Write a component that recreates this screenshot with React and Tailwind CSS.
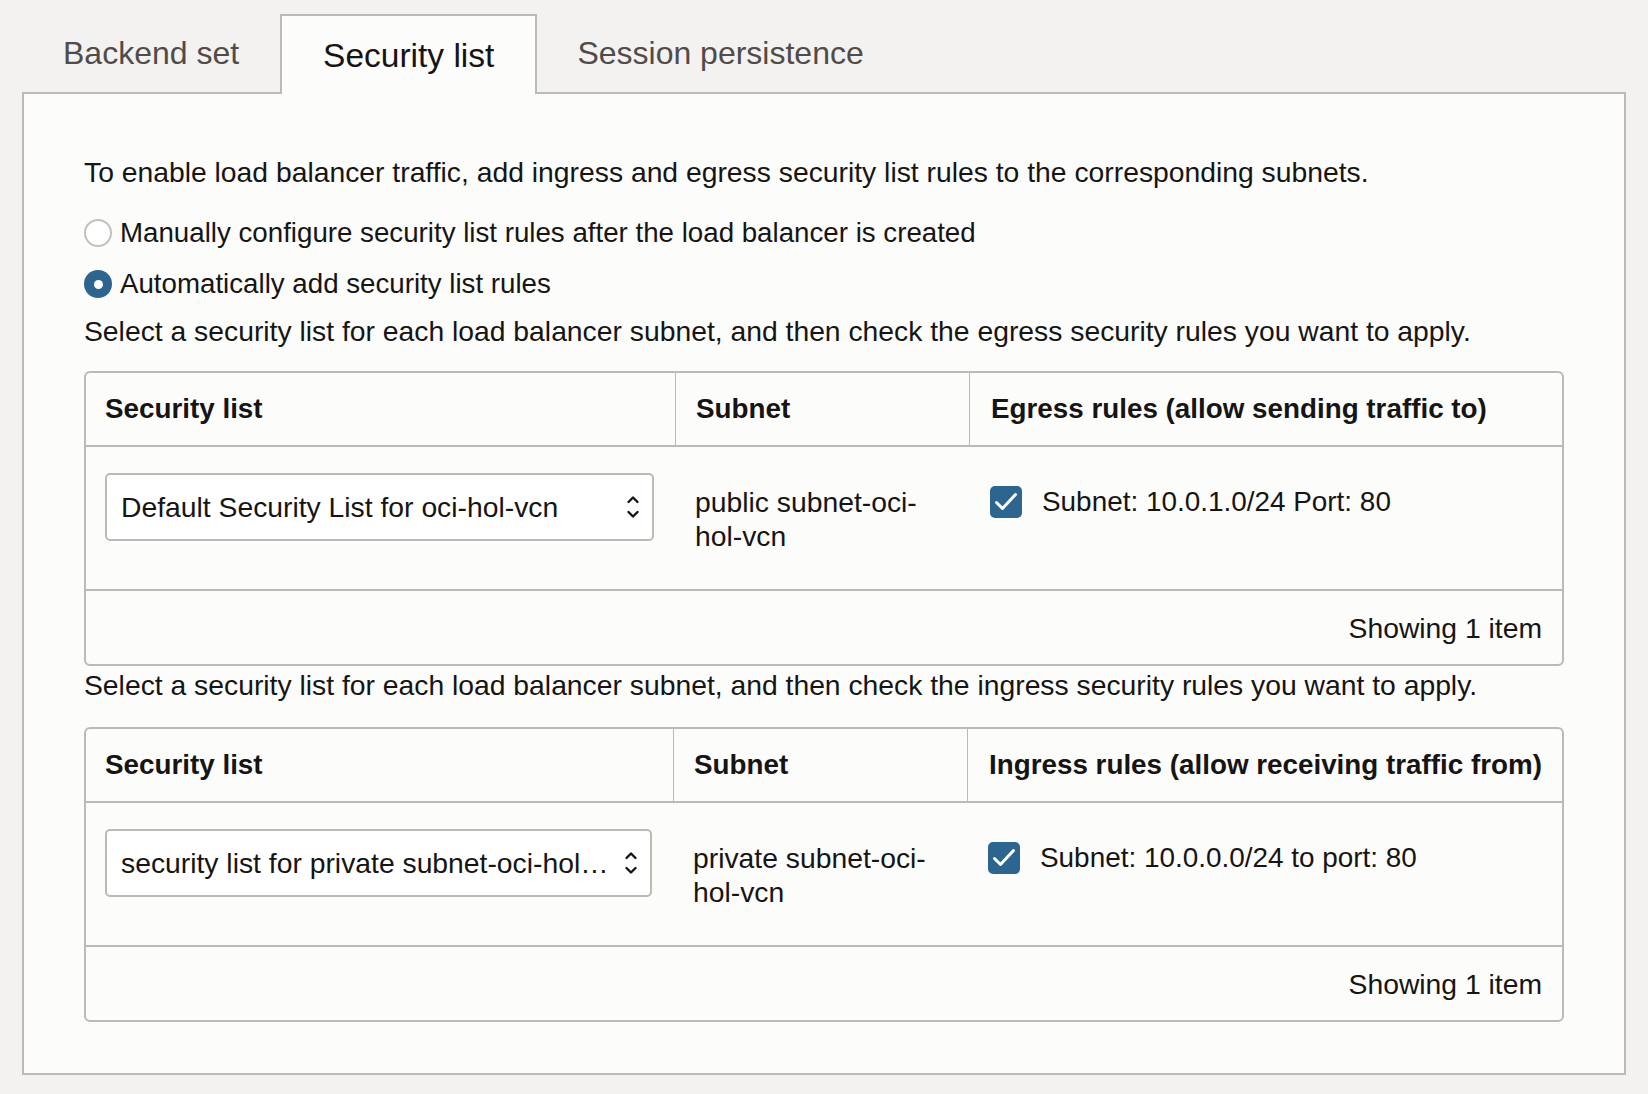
import React from "react";

const font = { fontFamily: '"Liberation Sans", Arial, sans-serif' };

function Chevrons() {
  return (
    <svg width="14" height="26" viewBox="0 0 14 26" fill="none" stroke="#161513" strokeWidth="2.4" strokeLinecap="round" strokeLinejoin="round">
      <path d="M2.5 8 L7 3.5 L11.5 8" />
      <path d="M2.5 18 L7 22.5 L11.5 18" />
    </svg>
  );
}

function Checkbox() {
  return (
    <div className="w-[32px] h-[32px] rounded-[5px] bg-[#2c6590] flex items-center justify-center shrink-0">
      <svg width="32" height="32" viewBox="0 0 32 32" fill="none" stroke="white" strokeWidth="3" strokeLinecap="round" strokeLinejoin="round">
        <path d="M6.5 16.5 L12.5 22.5 L25.5 8.5" />
      </svg>
    </div>
  );
}

function RuleTable({ selectText, subnet, ruleHeader, rule, col1 }) {
  return (
    <div className="border-2 border-[#bdb9b4] rounded-[6px] bg-[#fcfcfb]">
      <div className={`grid ${col1} h-[74px] border-b-2 border-[#bdb9b4] font-bold text-[27.8px]`}>
        <div className="flex items-center pl-[19px]">Security list</div>
        <div className="flex items-center pl-[20px] border-l border-[#bdb9b4]">Subnet</div>
        <div className="flex items-center pl-[21px] border-l border-[#bdb9b4] whitespace-nowrap">{ruleHeader}</div>
      </div>
      <div className={`grid ${col1} h-[144px] border-b-2 border-[#bdb9b4]`}>
        <div className="pl-[19px] pr-[21px] pt-[26px]">
          <div className="h-[68px] border-2 border-[#bdb9b4] rounded-[5px] bg-white flex items-center pl-[14px] pr-[12px] gap-[12px]">
            <span className="flex-1 truncate">{selectText}</span>
            <Chevrons />
          </div>
        </div>
        <div className="pl-[20px] pr-[10px] pt-[38px] leading-[34px]">{subnet}</div>
        <div className="pl-[21px] pt-[39px] flex items-start gap-[20px]">
          <Checkbox />
          <span className="leading-[32px] text-[27.9px]">{rule}</span>
        </div>
      </div>
      <div className="h-[73px] flex items-center justify-end pr-[20px]">Showing 1 item</div>
    </div>
  );
}

export default function App() {
  return (
    <div className="min-h-screen bg-[#f3f2f1] pt-[12px] px-[22px] pb-[18px] text-[#161513]" style={font}>
      <div className="flex items-end h-[80px] leading-[38px]">
        <div className="px-[41px] h-[78px] flex items-center text-[#4f4c4a] text-[32px]">Backend set</div>
        <div className="relative z-10 -mb-[2px] h-[80px] px-[41px] flex items-center border-2 border-b-0 border-[#bdb9b4] bg-[#fcfcfb] pt-[2px] text-[#161513] text-[33.5px]">
          Security list
        </div>
        <div className="px-[40px] h-[78px] flex items-center text-[#4f4c4a] text-[32px]">Session persistence</div>
      </div>
      <div className="border-2 border-[#bdb9b4] bg-[#fcfcfb] px-[60px] pt-[61px] pb-[51px] text-[28.3px] leading-[34px]">
        <p>To enable load balancer traffic, add ingress and egress security list rules to the corresponding subnets.</p>
        <div className="mt-[27px] flex items-center gap-[8px] text-[27.7px]">
          <span className="w-[28px] h-[28px] rounded-full border-2 border-[#c4c1bd] bg-white shrink-0" />
          <span>Manually configure security list rules after the load balancer is created</span>
        </div>
        <div className="mt-[17px] flex items-center gap-[8px] text-[27.7px]">
          <span className="w-[28px] h-[28px] rounded-full bg-[#2c6590] flex items-center justify-center shrink-0">
            <span className="w-[9px] h-[9px] rounded-full bg-white" />
          </span>
          <span>Automatically add security list rules</span>
        </div>
        <p className="mt-[13px]">Select a security list for each load balancer subnet, and then check the egress security rules you want to apply.</p>
        <div className="mt-[23px]">
          <RuleTable
            col1="grid-cols-[589px_294px_1fr]"
            selectText="Default Security List for oci-hol-vcn"
            subnet="public subnet-oci-hol-vcn"
            ruleHeader="Egress rules (allow sending traffic to)"
            rule="Subnet: 10.0.1.0/24 Port: 80"
          />
        </div>
        <p className="mt-[2px]">Select a security list for each load balancer subnet, and then check the ingress security rules you want to apply.</p>
        <div className="mt-[25px]">
          <RuleTable
            col1="grid-cols-[587px_294px_1fr]"
            selectText="security list for private subnet-oci-hol-vcn"
            subnet="private subnet-oci-hol-vcn"
            ruleHeader="Ingress rules (allow receiving traffic from)"
            rule="Subnet: 10.0.0.0/24 to port: 80"
          />
        </div>
      </div>
    </div>
  );
}
